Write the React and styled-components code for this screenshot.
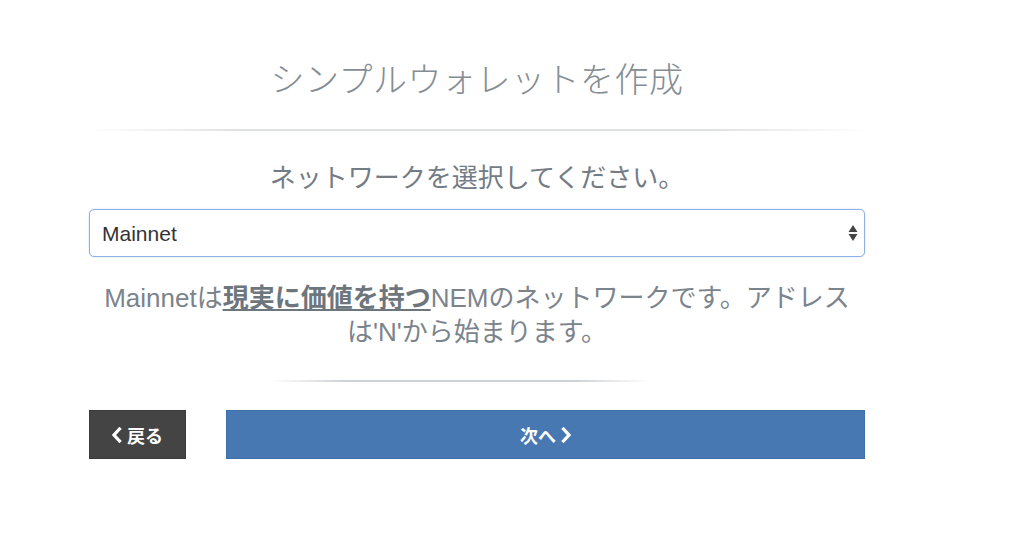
import styled, { createGlobalStyle } from "styled-components";

const Global = createGlobalStyle`
  body {
    margin: 0;
    background: #fff;
    font-family: "Liberation Sans", "Noto Sans CJK JP", sans-serif;
  }
`;

const Chevron = ({ right }) => (
    <ChevronIcon viewBox="0 0 10 16">
        <polyline
            points={right ? "2.5,2 8,8 2.5,14" : "7.5,2 2,8 7.5,14"}
            fill="none"
            stroke="#fff"
            strokeWidth="3.2"
            strokeLinecap="square"
        />
    </ChevronIcon>
);

export default function App() {
    return (
        <Page>
            <Global />
            <Wrap>
                <Title>シンプルウォレットを作成</Title>
                <Rule />
                <Lead>ネットワークを選択してください。</Lead>
                <SelectBox>
                    <Select defaultValue="mainnet">
                        <option value="mainnet">Mainnet</option>
                        <option value="testnet">Testnet</option>
                    </Select>
                    <Arrows viewBox="0 0 10 18">
                        <path d="M5 1 L9.5 8 L0.5 8 Z" fill="#444" />
                        <path d="M5 17 L9.5 10 L0.5 10 Z" fill="#444" />
                    </Arrows>
                </SelectBox>
                <Info>
                    Mainnetは<Strong>現実に価値を持つ</Strong>NEMのネットワークです。アドレスは'N'から始まります。
                </Info>
                <Rule short />
                <Buttons>
                    <Button dark>
                        <Chevron /> 戻る
                    </Button>
                    <Button wide>
                        次へ <Chevron right />
                    </Button>
                </Buttons>
            </Wrap>
        </Page>
    );
}

const Page = styled.div`
    padding: 60px 0 0 89px;
`;

const Wrap = styled.div`
    width: 776px;
    display: flex;
    flex-direction: column;
`;

const Title = styled.h1`
    margin: 0 0 29px;
    font-size: 34px;
    line-height: 40px;
    font-weight: 300;
    color: #858d94;
    text-align: center;
    letter-spacing: 0.5px;
`;

const Rule = styled.div`
    height: 2px;
    align-self: center;
    width: ${p => (p.short ? "380px" : "780px")};
    margin: ${p => (p.short ? "0 0 28px -34px" : "0 0 31px")};
    background: linear-gradient(
        to right,
        rgba(200, 204, 208, 0),
        rgba(200, 204, 208, ${p => (p.short ? 0.9 : 0.6)}) 20%,
        rgba(200, 204, 208, ${p => (p.short ? 0.9 : 0.6)}) 80%,
        rgba(200, 204, 208, 0)
    );
`;

const Lead = styled.h3`
    margin: 0 0 16px;
    font-size: 26px;
    line-height: 32px;
    font-weight: 400;
    color: #737c84;
    text-align: center;
`;

const SelectBox = styled.div`
    position: relative;
    height: 48px;
    margin-top: -1px;
`;

const Select = styled.select`
    appearance: none;
    width: 100%;
    height: 48px;
    box-sizing: border-box;
    padding: 0 30px 0 12px;
    border: 1px solid #8eb0e4;
    border-radius: 5px;
    background: #fff;
    font-family: "Liberation Sans", "Noto Sans CJK JP", sans-serif;
    font-size: 21px;
    color: #333;
    outline: none;
    box-shadow: 0 0 2px rgba(120, 160, 230, 0.4);
`;

const Arrows = styled.svg`
    position: absolute;
    right: 7px;
    top: 15px;
    width: 10px;
    height: 18px;
    pointer-events: none;
`;

const Info = styled.p`
    margin: 24px 0 31px;
    padding: 0;
    font-size: 26px;
    line-height: 34px;
    color: #7b848c;
    text-align: center;
`;

const Strong = styled.span`
    font-weight: 700;
    color: #6e767d;
    text-decoration: underline;
`;

const Buttons = styled.div`
    display: flex;
    gap: 40px;
`;

const Button = styled.button`
    display: flex;
    align-items: center;
    justify-content: center;
    gap: 5px;
    height: 49px;
    width: ${p => (p.wide ? "auto" : "97px")};
    flex: ${p => (p.wide ? "1" : "none")};
    border: 1px solid ${p => (p.dark ? "#3a3a3a" : "#3f6fa8")};
    border-radius: 0;
    background: ${p => (p.dark ? "#444" : "#4878b1")};
    color: #fff;
    font-family: "Liberation Sans", "Noto Sans CJK JP", sans-serif;
    font-size: 18px;
    font-weight: 700;
    cursor: pointer;
`;

const ChevronIcon = styled.svg`
    width: 10px;
    height: 16px;
    flex: none;
`;
